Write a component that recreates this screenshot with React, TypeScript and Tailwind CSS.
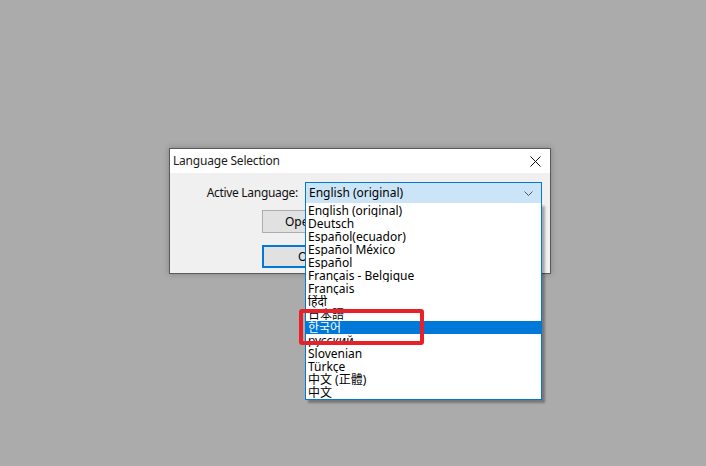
import React from 'react';

const languages = [
  'English (original)',
  'Deutsch',
  'Español(ecuador)',
  'Español México',
  'Español',
  'Français - Belgique',
  'Français',
  'हिंदी',
  '日本語',
  '한국어',
  'русский',
  'Slovenian',
  'Türkçe',
  '中文 (正體)',
  '中文',
];

const selected = 9;

const uiFont = {
  fontFamily: '"Noto Sans", "Noto Sans CJK JP", "Noto Sans CJK KR", sans-serif',
};

const App = () => {
  return (
    <div className="relative w-[706px] h-[466px] bg-[#ababab] overflow-hidden" style={uiFont}>
      {/* dialog window */}
      <div className="absolute left-[169px] top-[148px] w-[382px] h-[126px] border border-[#5a5a5a] bg-[#f0f0f0] flex flex-col shadow-[0_0_6px_rgba(0,0,0,0.25)]">
        <div className="h-[24px] bg-white flex items-center justify-between pl-[3px] pr-[9px]">
          <span className="text-[12px] text-[#1a1a1a] leading-none tracking-[-0.2px]">Language Selection</span>
          <svg width="11" height="11" viewBox="0 0 11 11">
            <path d="M0.5 0.5 L10.5 10.5 M10.5 0.5 L0.5 10.5" stroke="#111" strokeWidth="1" />
          </svg>
        </div>
        <div className="flex-1 pt-[9px]">
          <div className="flex items-center">
            <div className="w-[128px] text-right text-[12px] text-[#111] leading-none tracking-[-0.3px] whitespace-nowrap">
              Active Language:
            </div>
            <div className="ml-[7px] w-[237px] h-[22px] bg-[#cce4f7] border border-[#0078d7] flex items-center justify-between pl-[3px] pr-[8px]">
              <span className="text-[12px] text-black leading-none">English (original)</span>
              <svg width="9" height="5" viewBox="0 0 9 5">
                <path d="M0.5 0.5 L4.5 4.5 L8.5 0.5" stroke="#555" strokeWidth="1" fill="none" />
              </svg>
            </div>
          </div>
          <div className="ml-[92px] mt-[6px] w-[150px] h-[23px] bg-[#e1e1e1] border border-[#adadad] flex items-center pl-[22px] text-[12px] text-black whitespace-nowrap overflow-hidden">
            Open Language Folder
          </div>
          <div className="ml-[92px] mt-[12px] w-[150px] h-[23px] bg-[#e1e1e1] border-2 border-[#0078d7] flex items-center pl-[34px] text-[12px] text-black whitespace-nowrap overflow-hidden">
            OK
          </div>
        </div>
      </div>

      {/* open dropdown list */}
      <div className="absolute left-[305px] top-[203px] w-[237px] h-[197px] bg-white border-x border-b border-[#0078d7] pt-[1px] shadow-[3px_3px_2px_rgba(0,0,0,0.3)]">
        {languages.map((lang, i) => (
          <div
            key={lang}
            className={
              i === selected
                ? 'h-[13px] bg-[#0078d7] text-white text-[12px] leading-[13px] pl-[2px] whitespace-nowrap overflow-hidden'
                : 'h-[13px] text-black text-[12px] leading-[13px] pl-[2px] whitespace-nowrap overflow-hidden'
            }
          >
            {lang}
          </div>
        ))}
      </div>

      {/* red annotation box */}
      <div className="absolute left-[299px] top-[309px] w-[125px] h-[36px] border-[4px] border-[#e8202a] rounded-[3px]" />
    </div>
  );
};

export default App;
